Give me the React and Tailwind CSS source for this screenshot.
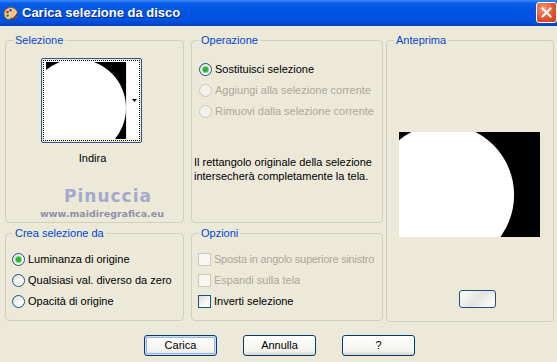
import React from "react";

const blueLabel = "text-[#0046D5]";

function Radio({ checked, disabled }) {
  return (
    <span
      className={
        "flex items-center justify-center w-[13px] h-[13px] rounded-full border shrink-0 " +
        (disabled
          ? "border-[#CAC8BB] bg-[#F3F2EA]"
          : "border-[#1C5180] bg-[linear-gradient(135deg,#DCDCD7,#FFFFFF_75%)]")
      }
    >
      {checked && <span className="w-[5px] h-[5px] rounded-full bg-[#2FAF2F] shadow-[0_0_0_1px_#7DD17D]" />}
    </span>
  );
}

function Check({ disabled }) {
  return (
    <span
      className={
        "w-[13px] h-[13px] border shrink-0 " +
        (disabled
          ? "border-[#CAC8BB] bg-[#F7F6F0]"
          : "border-[#1C5180] bg-[linear-gradient(135deg,#DCDCD7,#FFFFFF_80%)]")
      }
    />
  );
}

function Option({ children, disabled, control, tight }) {
  return (
    <div className={"flex items-center h-[21px] gap-[3px] whitespace-nowrap " + (disabled ? "text-[#ACA899]" : "text-black")}>
      {control}
      <span className={"leading-[13px] " + (tight ? "tracking-[-0.25px]" : "")}>{children}</span>
    </div>
  );
}

function Group({ title, className, children }) {
  return (
    <fieldset className={"border border-[#D0D0BF] rounded-[4px] " + className}>
      <legend className={"ml-[7px] px-[2px] leading-[13px] " + blueLabel}>{title}</legend>
      {children}
    </fieldset>
  );
}

function Button({ children, isDefault }) {
  return (
    <button
      className={
        "w-[73px] h-[21px] border border-[#003C74] rounded-[3px] bg-[linear-gradient(to_bottom,#FFFFFF,#F3F2EC_80%,#D8D3C8)] text-black leading-[13px] " +
        (isDefault ? "shadow-[inset_0_0_0_1px_#CEDCF8,inset_0_0_0_2px_#98B6EA]" : "")
      }
    >
      {children}
    </button>
  );
}

function PaletteIcon() {
  return (
    <svg width="16" height="16" viewBox="0 0 16 16">
      <path d="M8 1.5C4 1.5 1 4 1 7.5c0 3 2 6 5 6 1.5 0 1.5-1.5 2.5-1.5s1.5 1 3 .5c2-.8 3-3 3-5C14.5 4 11.5 1.5 8 1.5z" fill="#F0C890" stroke="#8A5A2A" strokeWidth="1" />
      <circle cx="4.5" cy="6" r="1.3" fill="#E02020" />
      <circle cx="7.5" cy="4.3" r="1.3" fill="#2050E0" />
      <circle cx="4.6" cy="9.6" r="1.3" fill="#20A030" />
      <circle cx="11" cy="5" r="1.2" fill="#F0D020" />
      <path d="M9 14.5 14.5 8" stroke="#6A3A1A" strokeWidth="1.6" />
      <path d="M13.5 9 15 7.2" stroke="#3050C0" strokeWidth="1.8" />
    </svg>
  );
}

function ThumbImage() {
  return (
    <svg width="80" height="77" viewBox="0 0 80 77" className="block">
      <rect width="80" height="77" fill="#000" />
      <circle cx="31" cy="46" r="49" fill="#fff" />
    </svg>
  );
}

function PreviewImage() {
  return (
    <svg width="141" height="105" viewBox="0 0 141 105" className="block">
      <rect width="141" height="105" fill="#000" />
      <circle cx="44.5" cy="63" r="70.6" fill="#fff" />
    </svg>
  );
}

export default function App() {
  return (
    <div className="w-[557px] h-[362px] bg-[#ECE9D8] flex flex-col overflow-hidden font-['Liberation_Sans',Arial,sans-serif] text-[11px]">
      <div className="h-[26px] shrink-0 flex items-center bg-[linear-gradient(to_bottom,#3A8CF6_0%,#0A5EEA_12%,#0054E3_45%,#0052DF_80%,#003FBE_100%)]">
        <span className="ml-[3px] mt-[1px]">
          <PaletteIcon />
        </span>
        <span className="ml-[3px] text-white font-bold text-[13px] leading-[16px] [text-shadow:1px_1px_#0A2A8A]">
          Carica selezione da disco
        </span>
        <span className="ml-auto mr-0 mt-[-2px] w-[21px] h-[21px] rounded-[3px] border border-white bg-[radial-gradient(circle_at_35%_30%,#F29B7E,#E0542E_55%,#C8401C)] flex items-center justify-center">
          <svg width="11" height="11" viewBox="0 0 11 11">
            <path d="M1.5 1.5 9.5 9.5M9.5 1.5 1.5 9.5" stroke="#fff" strokeWidth="2" strokeLinecap="square" />
          </svg>
        </span>
      </div>

      <div className="flex pl-[5px] pt-[8px]">
        <div className="w-[179px] flex flex-col gap-[4px]">
          <Group title="Selezione" className="h-[189px]">
            <div className="ml-[35px] mt-[11px] w-[101px] h-[85px] border border-[#31558F] rounded-[2px] p-[1px]">
              <div className="h-full border border-dotted border-black bg-white flex">
                <div className="ml-[2px] mt-[1px]">
                  <ThumbImage />
                </div>
                <div className="flex-1 flex items-center justify-end pr-[2px] border-l border-dotted border-[#D8D8D8]">
                  <svg width="5" height="3" viewBox="0 0 5 3">
                    <path d="M0 0h5L2.5 3z" fill="#000" />
                  </svg>
                </div>
              </div>
            </div>
            <div className="mt-[9px] ml-[-4px] text-center leading-[13px] text-black">Indira</div>
            <div className="mt-[21px] ml-[27px] text-center font-['DejaVu_Sans',sans-serif] font-bold text-[17px] leading-[20px] tracking-[1px] text-[#A8A8CC]">
              Pinuccia
            </div>
            <div className="mt-[1px] ml-[15px] text-center font-['DejaVu_Sans',sans-serif] font-bold text-[9.5px] leading-[13px] text-[#9090AA]">
              www.maidiregrafica.eu
            </div>
          </Group>
          <Group title="Crea selezione da" className="h-[94px]">
            <div className="mt-[9px] pl-[6px] flex flex-col">
              <Option control={<Radio checked />}>Luminanza di origine</Option>
              <Option control={<Radio />}>Qualsiasi val. diverso da zero</Option>
              <Option control={<Radio />}>Opacità di origine</Option>
            </div>
          </Group>
        </div>

        <div className="ml-[7px] w-[192px] flex flex-col gap-[4px]">
          <Group title="Operazione" className="h-[189px]">
            <div className="mt-[12px] pl-[7px] flex flex-col">
              <Option control={<Radio checked />}>Sostituisci selezione</Option>
              <Option disabled control={<Radio disabled />}>Aggiungi alla selezione corrente</Option>
              <Option disabled control={<Radio disabled />}>Rimuovi dalla selezione corrente</Option>
            </div>
            <p className="mt-[33px] pl-[2px] leading-[14px] text-black">
              Il rettangolo originale della selezione
              <br />
              intersecherà completamente la tela.
            </p>
          </Group>
          <Group title="Opzioni" className="h-[94px]">
            <div className="mt-[9px] pl-[6px] flex flex-col">
              <Option tight disabled control={<Check disabled />}>Sposta in angolo superiore sinistro</Option>
              <Option disabled control={<Check disabled />}>Espandi sulla tela</Option>
              <Option control={<Check />}>Inverti selezione</Option>
            </div>
          </Group>
        </div>

        <div className="ml-[3px] w-[168px]">
          <Group title="Anteprima" className="h-[288px]">
            <div className="mt-[85px] ml-[12px]">
              <PreviewImage />
            </div>
            <div className="mt-[53px] ml-[72px] w-[37px] h-[18px] border border-[#1C5180] rounded-[3px] bg-[linear-gradient(135deg,#FFFFFF,#E4E4E0_50%,#FFFFFF)]" />
          </Group>
        </div>
      </div>

      <div className="flex pl-[144px] gap-[26px] mt-[13px]">
        <Button isDefault>Carica</Button>
        <Button>Annulla</Button>
        <Button>?</Button>
      </div>
    </div>
  );
}
